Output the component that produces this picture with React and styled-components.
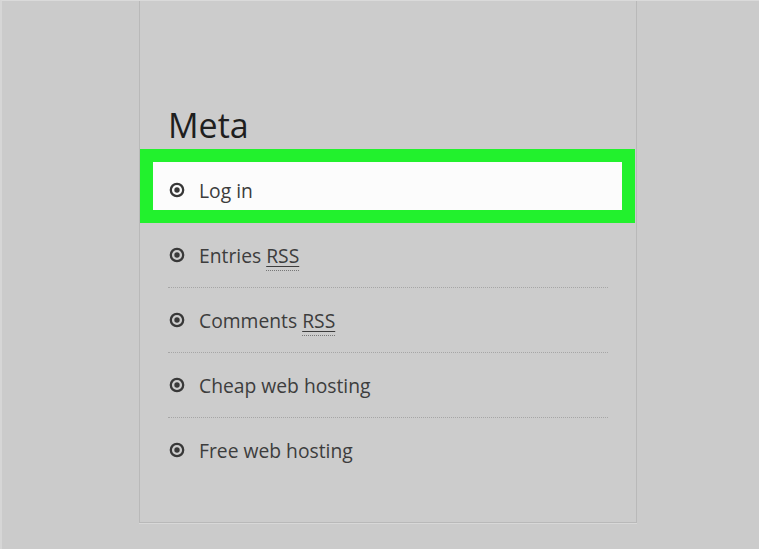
import React from 'react'
import styled, { createGlobalStyle } from 'styled-components'

const GlobalStyle = createGlobalStyle`
  html, body {
    margin: 0;
    padding: 0;
    background: #cbcbcb;
  }
  body {
    font-family: "Open Sans", "Noto Sans", "Liberation Sans", sans-serif;
  }
`

const Page = styled.div`
  width: 759px;
  height: 549px;
  box-sizing: border-box;
  border-top: 1px solid #dadada;
  border-left: 2px solid #d6d6d6;
  background: #cbcbcb;
  display: flex;
  align-items: flex-start;
  overflow: hidden;
`

const Sidebar = styled.aside`
  margin-left: 137px;
  margin-top: -1px;
  width: 498px;
  height: 523px;
  box-sizing: border-box;
  border: 1px solid #b9b9b9;
  border-top: none;
  background: #cccccc;
  padding: 103px 28px 0 28px;
  box-shadow: 0 1px 0 #d8d8d8;
`

const Heading = styled.h2`
  margin: 0 0 11px 0;
  font-size: 34px;
  line-height: 44px;
  font-weight: 400;
  color: #1e1e1e;
`

const List = styled.ul`
  list-style: none;
  margin: 0;
  padding: 0;
`

const Row = styled.li`
  position: relative;
  height: 64px;
  display: flex;
  align-items: center;
  gap: 14px;
  padding-left: 1px;
  border-bottom: 1px dotted ${p => (p.$last ? 'transparent' : '#a6a6a6')};
  font-size: 19.3px;
  color: #3d3d3d;
`

const Highlight = styled.div`
  position: absolute;
  left: -15px;
  top: 4px;
  width: 469px;
  height: 48px;
  background: #fcfcfc;
  outline: 13px solid #22f12d;
  z-index: 0;
`

const Icon = styled.svg`
  position: relative;
  z-index: 1;
  flex: none;
  width: 16px;
  height: 16px;
`

const Label = styled.span`
  position: relative;
  z-index: 1;
`

const Abbr = styled.abbr`
  text-decoration: underline;
  text-decoration-thickness: 1px;
  text-underline-offset: 3px;
  border-bottom: 1px dotted #777;
  padding-bottom: 1px;
`

const Bullet = () => (
  <Icon viewBox="0 0 16 16">
    <circle cx="8" cy="8" r="6.2" fill="none" stroke="#383838" strokeWidth="2.3" />
    <circle cx="8" cy="8" r="2.7" fill="#383838" />
  </Icon>
)

const items = [
  { text: 'Log in', highlight: true },
  { text: 'Entries ', abbr: 'RSS' },
  { text: 'Comments ', abbr: 'RSS' },
  { text: 'Cheap web hosting' },
  { text: 'Free web hosting' },
]

export default function App() {
  return (
    <>
      <GlobalStyle />
      <Page>
        <Sidebar>
          <Heading>Meta</Heading>
          <List>
            {items.map((it, i) => (
              <Row key={i} $last={i === items.length - 1 || it.highlight}>
                {it.highlight && <Highlight />}
                <Bullet />
                <Label>
                  {it.text}
                  {it.abbr && <Abbr title="Really Simple Syndication">{it.abbr}</Abbr>}
                </Label>
              </Row>
            ))}
          </List>
        </Sidebar>
      </Page>
    </>
  )
}
